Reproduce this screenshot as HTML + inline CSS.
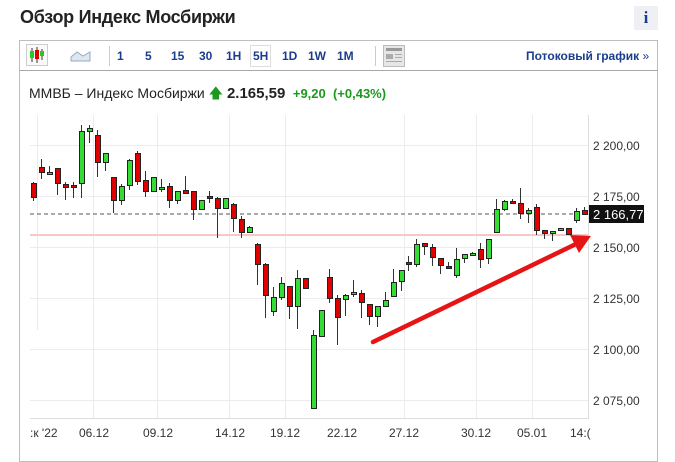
<!DOCTYPE html>
<html><head><meta charset="utf-8"><style>
body{margin:0;width:675px;height:449px;background:#fff;overflow:hidden;font-family:"Liberation Sans",sans-serif;position:relative}
.t{position:absolute;left:20px;top:7px;font-size:18px;font-weight:bold;color:#222;letter-spacing:-0.3px}
.i{position:absolute;left:634px;top:6px;width:24px;height:24px;background:#eef0f3;color:#1a3e8c;font:bold 17px "Liberation Serif",serif;text-align:center;line-height:24px}
.box{position:absolute;left:19px;top:40px;width:637px;height:420px;border:1px solid #bdbdbd}
.tb{position:absolute;left:19px;top:40px;width:637px;height:29px;border:1px solid #bdbdbd;border-bottom-color:#a8a8a8}
.tb span{position:absolute;top:8px;font-size:12px;font-weight:bold;color:#1a3e8c}
.sel{border:1px solid #ddd;padding:3px 2px;top:4px!important}
.ct{position:absolute;left:29px;top:83px;font-size:14px;color:#222}
.ct b{font-size:15px}
.g{color:#1b9a1b}
</style></head><body>
<div class="t">Обзор Индекс Мосбиржи</div>
<div class="i">i</div>
<div class="box"></div>
<div class="tb">
<svg style="position:absolute;left:6px;top:3px" width="22" height="22"><rect x="0.5" y="0.5" width="21" height="21" fill="#fafafa" stroke="#ccc"/><line x1="6" y1="4" x2="6" y2="18" stroke="#333"/><rect x="4" y="7" width="4" height="7" fill="#2c2"/><line x1="11" y1="3" x2="11" y2="19" stroke="#333"/><rect x="9" y="6" width="4" height="9" fill="#d00"/><line x1="16" y1="5" x2="16" y2="16" stroke="#333"/><rect x="14" y="7" width="4" height="5" fill="#2c2"/></svg>
<svg style="position:absolute;left:50px;top:8px" width="22" height="14"><path d="M1 12 L1 8 L7 3 L13 7 L20 3 L20 12Z" fill="#dde6f2" stroke="#9ab" stroke-width="1"/></svg>
<div style="position:absolute;left:89px;top:5px;width:1px;height:20px;background:#ccc"></div>
<span style="left:97px">1</span><span style="left:125px">5</span><span style="left:151px">15</span><span style="left:179px">30</span><span style="left:206px">1H</span><span class="sel" style="left:230px">5H</span><span style="left:262px">1D</span><span style="left:288px">1W</span><span style="left:317px">1M</span>
<div style="position:absolute;left:355px;top:5px;width:1px;height:20px;background:#ccc"></div>
<svg style="position:absolute;left:363px;top:4px" width="22" height="22"><rect x="0.5" y="0.5" width="21" height="21" fill="#e6e6e6" stroke="#bbb"/><rect x="3" y="3" width="16" height="3" fill="#999"/><rect x="3" y="9" width="7" height="5" fill="#aaa"/><rect x="12" y="9" width="7" height="1" fill="#aaa"/><rect x="12" y="12" width="7" height="1" fill="#aaa"/><rect x="3" y="16" width="16" height="1" fill="#aaa"/></svg>
<span style="left:506px;font-size:12px">Потоковый график <span style="position:static;font-weight:normal">»</span></span>
</div>
<div class="ct">ММВБ – Индекс Мосбиржи <span class="g">&#129093;</span> <b>2.165,59</b> <span class="g" style="font-size:13px;font-weight:bold">&nbsp;+9,20 &nbsp;(+0,43%)</span></div>
<svg style="position:absolute;left:0;top:0" width="675" height="449">
<g stroke="#ececec" stroke-width="1">
<line x1="30" y1="145.5" x2="588" y2="145.5"/><line x1="30" y1="196.5" x2="588" y2="196.5"/><line x1="30" y1="247.5" x2="588" y2="247.5"/><line x1="30" y1="298.5" x2="588" y2="298.5"/><line x1="30" y1="349.5" x2="588" y2="349.5"/><line x1="30" y1="400.5" x2="588" y2="400.5"/>
<line x1="37.5" y1="115" x2="37.5" y2="330"/><line x1="93.5" y1="115" x2="93.5" y2="418"/><line x1="157.5" y1="115" x2="157.5" y2="418"/><line x1="229.5" y1="115" x2="229.5" y2="418"/><line x1="285.5" y1="115" x2="285.5" y2="418"/><line x1="404.5" y1="115" x2="404.5" y2="418"/><line x1="476.5" y1="115" x2="476.5" y2="418"/><line x1="532.5" y1="115" x2="532.5" y2="418"/>
</g>
<line x1="588.5" y1="115" x2="588.5" y2="419" stroke="#ddd"/>
<line x1="30" y1="418.5" x2="588" y2="418.5" stroke="#ddd"/>
<line x1="30" y1="235" x2="588" y2="235" stroke="#f7c6c6" stroke-width="2"/>
<line x1="30" y1="214" x2="588" y2="214" stroke="#777" stroke-width="1.3" stroke-dasharray="4,3"/>
<g id="c" stroke="#333" stroke-width="1"></g>
<g font-size="12" fill="#333">
<text x="593" y="150">2 200,00</text><text x="593" y="201">2 175,00</text><text x="593" y="252">2 150,00</text><text x="593" y="303">2 125,00</text><text x="593" y="354">2 100,00</text><text x="593" y="405">2 075,00</text>
<text x="30" y="437">:к '22</text><text x="79" y="437">06.12</text><text x="143" y="437">09.12</text><text x="215" y="437">14.12</text><text x="270" y="437">19.12</text><text x="327" y="437">22.12</text><text x="389" y="437">27.12</text><text x="461" y="437">30.12</text><text x="517" y="437">05.01</text><text x="570" y="437">14:(</text>
</g>
<rect x="589" y="205" width="55" height="18" fill="#111"/>
<text x="593" y="219" font-size="13" fill="#fff">2 166,77</text>
<line x1="373" y1="342" x2="576" y2="244" stroke="#e61414" stroke-width="4.5" stroke-linecap="round"/>
<polygon points="591,236 570,235 579,253" fill="#e61414"/>
</svg>
<script>
var d=[[33,183,197,182,201,0],[41,167,172,159,179,0],[49,172,174,166,175,1],[57,168,183,168,195,0],[65,184,187,182,200,0],[73,185,187,182,198,0],[81,131,183,125,198,1],[89,128,131,125,143,1],[97,135,162,130,177,0],[105,153,162,153,171,1],[113,177,200,177,213,0],[121,186,200,184,205,1],[129,160,185,159,190,1],[137,153,181,151,185,0],[145,180,191,171,197,0],[153,177,191,177,191,1],[161,187,189,179,192,1],[169,186,200,183,208,0],[177,191,200,191,204,1],[185,190,193,176,194,0],[193,191,209,191,220,0],[201,200,209,200,209,1],[209,196,198,191,203,0],[217,198,208,197,238,0],[225,198,208,198,208,1],[233,204,218,203,232,0],[241,219,232,216,238,0],[249,227,232,226,232,1],[257,244,264,243,285,0],[265,264,295,263,318,0],[273,297,311,287,316,1],[281,283,297,277,300,1],[289,286,306,286,319,0],[297,278,306,270,329,1],[305,278,288,278,288,0],[313,335,408,330,408,1],[321,310,336,310,336,1],[329,277,298,269,303,0],[337,298,317,295,345,0],[345,295,299,294,316,1],[353,292,293,280,297,1],[361,293,302,290,318,0],[369,304,316,304,325,0],[377,306,316,306,327,1],[385,300,306,292,306,1],[393,282,296,269,296,1],[401,270,281,270,291,1],[408,262,264,256,271,0],[416,244,264,239,267,1],[424,243,246,243,255,0],[432,247,257,244,266,0],[440,258,265,258,274,0],[448,266,268,262,269,0],[456,259,275,248,278,1],[464,254,258,254,263,1],[472,253,255,252,255,1],[480,249,259,243,268,0],[488,239,258,239,264,1],[496,209,232,199,232,1],[504,201,209,200,211,1],[512,201,202,199,203,0],[520,203,213,188,219,0],[528,210,213,208,223,1],[536,207,230,204,235,0],[544,230,233,230,239,0],[552,231,233,231,241,1],[560,228,230,228,230,1],[568,228,234,228,234,0],[576,211,220,208,223,1],[584,210,214,207,214,0]];
var s='';d.forEach(function(c){s+='<line x1="'+(c[0]+.5)+'" y1="'+c[3]+'" x2="'+(c[0]+.5)+'" y2="'+c[4]+'"/><rect x="'+(c[0]-2)+'.5" y="'+c[1]+'.5" width="5" height="'+Math.max(c[2]-c[1],2)+'" fill="'+(c[5]?'#33dd33':'#e00000')+'" stroke="#222"/>';});
document.getElementById('c').innerHTML=s;
</script>
</body></html>
